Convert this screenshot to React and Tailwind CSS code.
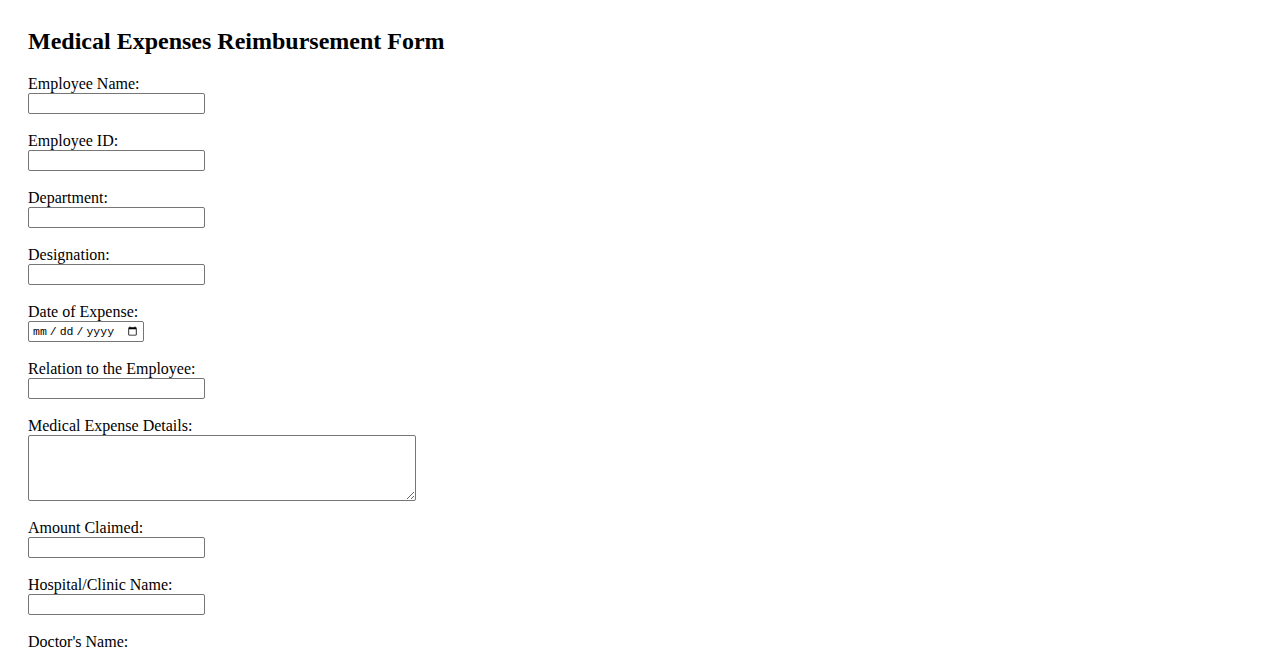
import React from "react";

const fields = [
  { id: "name", label: "Employee Name:" },
  { id: "empId", label: "Employee ID:" },
  { id: "dept", label: "Department:" },
  { id: "designation", label: "Designation:" },
  { id: "date", label: "Date of Expense:", type: "date" },
  { id: "relation", label: "Relation to the Employee:" },
  { id: "details", label: "Medical Expense Details:", type: "textarea" },
  { id: "amount", label: "Amount Claimed:" },
  { id: "hospital", label: "Hospital/Clinic Name:" },
  { id: "doctor", label: "Doctor's Name:" },
];

const box = "block border border-[#767676] rounded-[2px] bg-white text-[13.33px] outline-none";

function Field({ id, label, type }) {
  return (
    <div className="mb-[18px]">
      <label htmlFor={id} className="block h-[18px] leading-[18px]">
        {label}
      </label>
      {type === "textarea" ? (
        <textarea
          id={id}
          rows={4}
          className={`${box} w-[388px] h-[66px] px-[2px] py-[2px] font-['Liberation_Mono',monospace]`}
        />
      ) : type === "date" ? (
        <input
          id={id}
          type="date"
          className={`${box} w-[116px] h-[21px] pl-[3px] pr-[3px] text-black font-['Liberation_Mono',monospace] !text-[11.5px] [&::-webkit-datetime-edit-text]:px-[2px]`}
        />
      ) : (
        <input id={id} type="text" className={`${box} w-[177px] h-[21px] px-[2px] font-['Liberation_Sans',Arial,sans-serif]`} />
      )}
    </div>
  );
}

export default function App() {
  return (
    <div className="min-h-screen bg-white pt-[27px] pl-[28px] text-[16px] text-black font-['Liberation_Serif','Times_New_Roman',serif]">
      <h2 className="text-[24px] font-bold leading-[28px] mb-[20px]">Medical Expenses Reimbursement Form</h2>
      <form>
        {fields.map((f) => (
          <Field key={f.id} {...f} />
        ))}
      </form>
    </div>
  );
}
